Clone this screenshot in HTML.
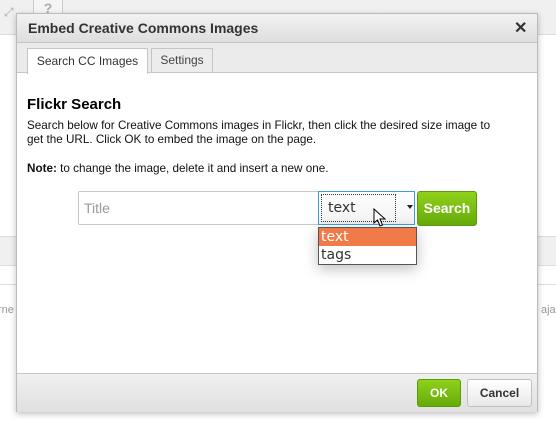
<!DOCTYPE html>
<html><head><style>
body{margin:0;width:556px;height:429px;position:relative;overflow:hidden;background:#fff;font-family:"Liberation Sans",Arial,sans-serif;}
.abs{position:absolute}
</style></head><body>
<div class="abs" style="left:0;top:0;width:556px;height:34px;background:#f0f0f0;border-bottom:1px solid #ddd"></div>
<div class="abs" style="left:4px;top:5px;font-size:12px;color:#aaa">⤢</div>
<div class="abs" style="left:33px;top:0;width:28px;height:16px;border:1px solid #ccc;border-top:none;background:#f5f5f5;color:#aaa;font-size:14px;font-weight:bold;text-align:center">?</div>
<div class="abs" style="left:0;top:236px;width:556px;height:28px;background:#f0f0f0;border-top:1px solid #ddd;border-bottom:1px solid #ddd"></div>
<div class="abs" style="left:0;top:284px;width:556px;border-top:1px solid #ddd"></div>
<div class="abs" style="left:-2px;top:304px;font-size:11px;color:#999">rne</div>
<div class="abs" style="left:541px;top:304px;font-size:11px;color:#999">aja</div>
<div class="abs" style="left:16px;top:13px;width:520px;height:397px;background:#fff;border:1px solid #bbb;box-shadow:0 2px 6px rgba(0,0,0,.25)">
  <div class="abs" style="left:0;top:0;width:520px;height:28px;background:linear-gradient(#f2f2f2,#dedede);border-bottom:1px solid #c5c5c5"></div>
  <div class="abs" style="left:11px;top:6px;font-size:14px;font-weight:bold;color:#333">Embed Creative Commons Images</div>
  <div class="abs" style="left:497px;top:4px;font-size:16px;font-weight:bold;color:#333">✕</div>
  <div class="abs" style="left:0;top:29px;width:520px;height:29px;background:#ebebeb;border-bottom:1px solid #c5c5c5"></div>
  <div class="abs" style="left:10px;top:34px;width:119px;height:25px;background:#fff;border:1px solid #c5c5c5;border-bottom:none;font-size:12px;color:#333;text-align:center;line-height:24px">Search CC Images</div>
  <div class="abs" style="left:134px;top:34px;width:60px;height:23px;background:#ececec;border:1px solid #c5c5c5;font-size:12px;color:#444;text-align:center;line-height:23px">Settings</div>
  <div class="abs" style="left:10px;top:82px;font-size:15px;font-weight:bold;color:#000">Flickr Search</div>
  <div class="abs" style="left:10px;top:105px;width:468px;font-size:11.7px;line-height:14px;color:#111">Search below for Creative Commons images in Flickr, then click the desired size image to get the URL. Click OK to embed the image on the page.</div>
  <div class="abs" style="left:10px;top:148px;font-size:11.7px;color:#111"><b>Note:</b> to change the image, delete it and insert a new one.</div>
  <div class="abs" style="left:61px;top:177px;height:34px;border:1px solid #c8c8c8;border-radius:2px;font-size:14px;color:#999;line-height:33px;padding-left:5px;box-sizing:border-box;width:242px">Title</div>
  <div class="abs" style="left:301px;top:177px;width:97px;height:34px;border:1px solid #3a9fdd;box-sizing:border-box;background:linear-gradient(#fff,#f2f2f2)"></div>
  <div class="abs" style="left:304px;top:180px;width:75px;height:28px;border:1px dotted #333;box-sizing:border-box"></div>
  <div class="abs" style="left:311px;top:186px;font-family:'DejaVu Sans',sans-serif;font-size:14px;color:#333">text</div>
  <div class="abs" style="left:390px;top:191px;width:0;height:0;border-left:3px solid transparent;border-right:3px solid transparent;border-top:4px solid #222"></div>
  <svg class="abs" style="left:356px;top:194px" width="14" height="20"><path d="M1 1 L1 15 L4.5 12 L7 18 L9.5 17 L7 11 L12 11 Z" fill="#fff" stroke="#000" stroke-width="1"/></svg>
  <div class="abs" style="left:400px;top:177px;width:60px;height:35px;background:linear-gradient(#8fd11a,#66aa0b);border:1px solid #5b9a0b;border-radius:3px;box-sizing:border-box;color:#fff;font-weight:bold;font-size:14px;line-height:33px;text-align:center">Search</div>
  <div class="abs" style="left:301px;top:213px;width:99px;height:38px;background:#fff;border:1px solid #555;box-sizing:border-box;box-shadow:0 4px 14px rgba(0,0,0,.25);font-family:'DejaVu Sans',sans-serif;font-size:14px">
    <div style="background:#f07a48;color:#fff;height:18px;line-height:18px;padding-left:2px">text</div>
    <div style="color:#333;height:18px;line-height:18px;padding-left:2px">tags</div>
  </div>
  <div class="abs" style="left:0;top:359px;width:520px;height:38px;background:linear-gradient(#f0f0f0,#e0e0e0);border-top:1px solid #c5c5c5"></div>
  <div class="abs" style="left:400px;top:365px;width:44px;height:28px;background:linear-gradient(#8fd11a,#66aa0b);border:1px solid #5b9a0b;border-radius:3px;box-sizing:border-box;color:#fff;font-weight:bold;font-size:12px;line-height:26px;text-align:center">OK</div>
  <div class="abs" style="left:450px;top:365px;width:65px;height:28px;background:linear-gradient(#fff,#e8e8e8);border:1px solid #c0c0c0;border-radius:3px;box-sizing:border-box;color:#333;font-weight:bold;font-size:12px;line-height:26px;text-align:center">Cancel</div>
</div>
</body></html>
